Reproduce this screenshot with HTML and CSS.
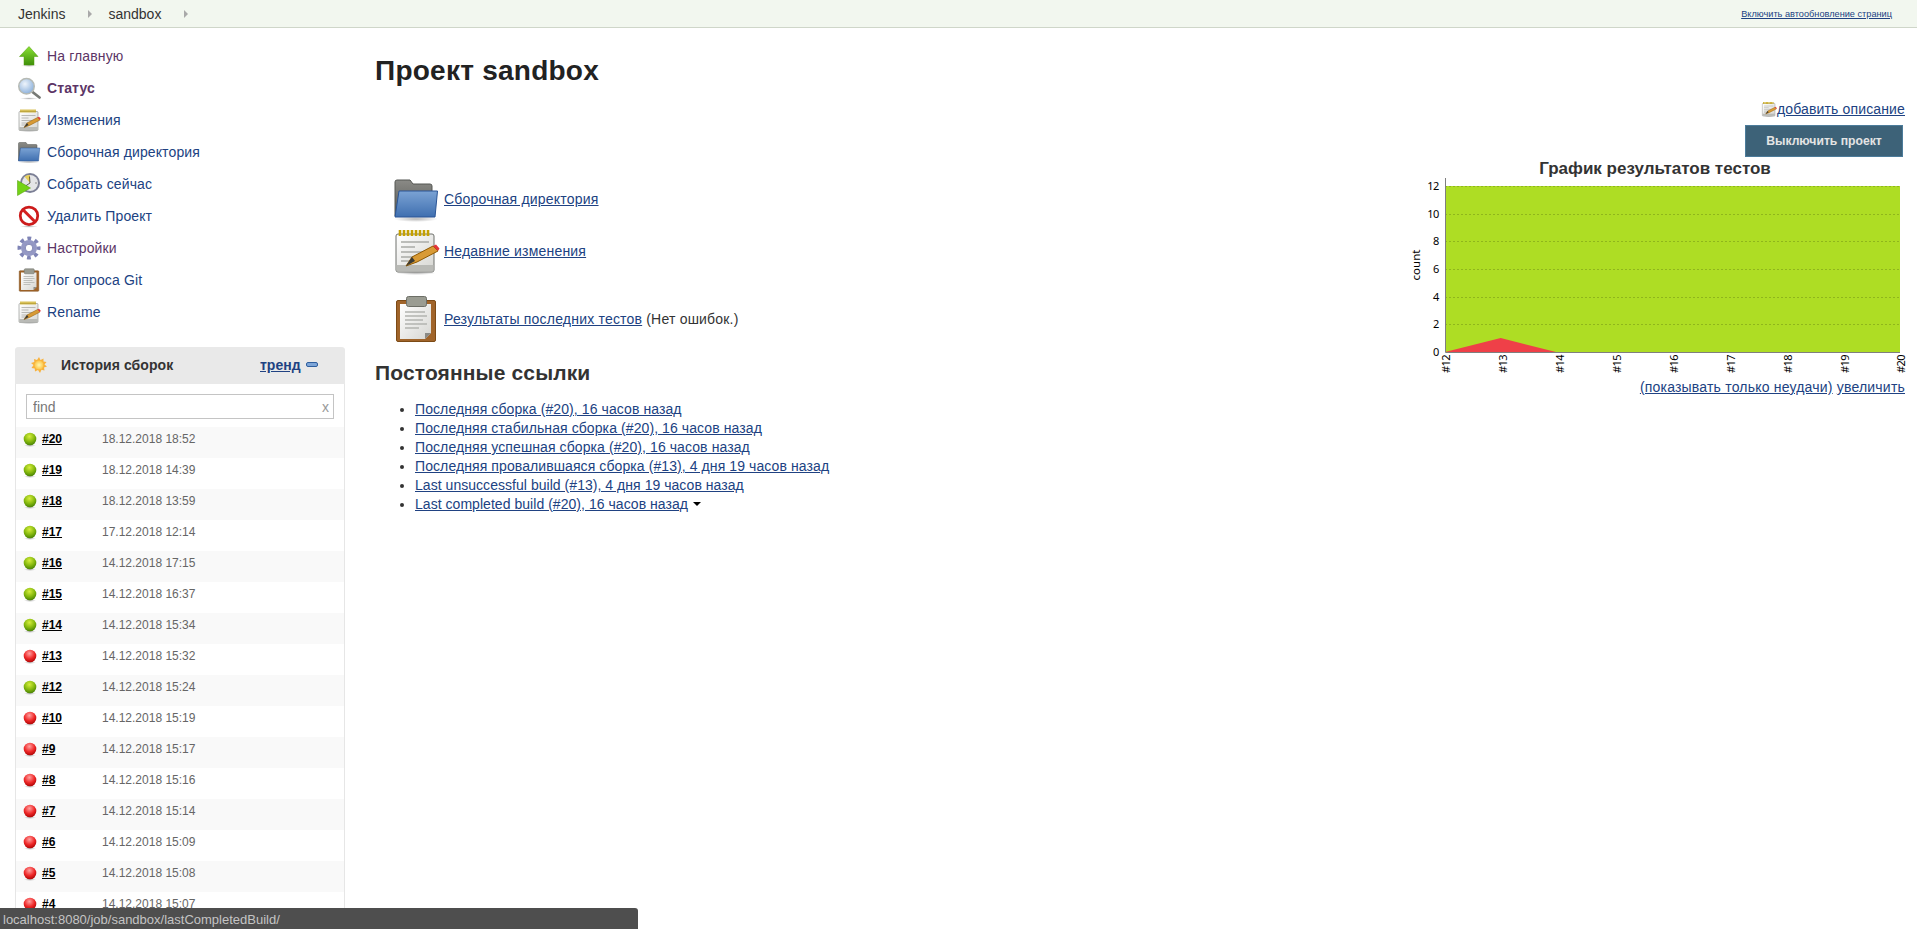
FILE: index.html
```html
<!DOCTYPE html>
<html lang="ru">
<head>
<meta charset="utf-8">
<title>sandbox [Jenkins]</title>
<link rel="stylesheet" href="styles.css">
</head>
<body>
<svg class="defs" width="0" height="0" aria-hidden="true">
  <defs>
    <linearGradient id="gGreen" x1="0" y1="0" x2="0" y2="1"><stop offset="0" stop-color="#8ae234"/><stop offset="1" stop-color="#3f8f0a"/></linearGradient>
    <linearGradient id="gBlue" x1="0" y1="0" x2="0" y2="1"><stop offset="0" stop-color="#7ba3d4"/><stop offset="1" stop-color="#3f6fb0"/></linearGradient>
    <linearGradient id="gGrey" x1="0" y1="0" x2="0" y2="1"><stop offset="0" stop-color="#8a8a86"/><stop offset="1" stop-color="#555753"/></linearGradient>
    <linearGradient id="gPaper" x1="0" y1="0" x2="1" y2="1"><stop offset="0" stop-color="#ffffff"/><stop offset="1" stop-color="#d6d6d2"/></linearGradient>
    <radialGradient id="gLens" cx=".4" cy=".35" r=".75"><stop offset="0" stop-color="#eef4fb"/><stop offset="1" stop-color="#7fa8d8"/></radialGradient>
    <radialGradient id="gBallG" cx=".45" cy=".3" r=".75"><stop offset="0" stop-color="#d6ee3c"/><stop offset=".55" stop-color="#85b80e"/><stop offset="1" stop-color="#3f7a04"/></radialGradient>
    <radialGradient id="gBallR" cx=".45" cy=".3" r=".75"><stop offset="0" stop-color="#ffa0a0"/><stop offset=".55" stop-color="#ef2929"/><stop offset="1" stop-color="#a40000"/></radialGradient>
    <radialGradient id="gSun" cx=".5" cy=".5" r=".5"><stop offset="0" stop-color="#fff7b0"/><stop offset="1" stop-color="#fcc64a"/></radialGradient>
    <radialGradient id="gShadow" cx=".5" cy=".5" r=".5"><stop offset="0" stop-color="#000" stop-opacity=".28"/><stop offset="1" stop-color="#000" stop-opacity="0"/></radialGradient>
    <symbol id="i-up" viewBox="0 0 48 48">
      <ellipse cx="24" cy="43" rx="16" ry="3" fill="url(#gShadow)"/>
      <path d="M24 5 42 25H34V42H14V25H5Z" fill="url(#gGreen)" stroke="#4e9a06" stroke-width="1"/>
    </symbol>
    <symbol id="i-search" viewBox="0 0 48 48">
      <ellipse cx="24" cy="45" rx="18" ry="2.500" fill="url(#gShadow)"/>
      <path d="M31 32 45 43" stroke="#777a75" stroke-width="5.500" stroke-linecap="round"/>
      <circle cx="19" cy="20.500" r="15.500" fill="url(#gLens)" stroke="#b6bab4" stroke-width="3"/>
    </symbol>
    <symbol id="i-notepad" viewBox="0 0 48 48">
      <ellipse cx="24" cy="46" rx="20" ry="2" fill="url(#gShadow)"/>
      <rect x="4" y="7" width="38" height="38" rx="2" fill="url(#gPaper)" stroke="#6f716c"/>
      <rect x="4.500" y="38" width="37" height="6.500" fill="#b9bab6"/>
      <path d="M8 3v6M12 3v6M16 3v6M20 3v6M24 3v6M28 3v6M32 3v6M36 3v6" stroke="#c4a000" stroke-width="2.600"/>
      <path d="M9 15h28M9 20h14M9 25h28M9 30h22M9 34h12" stroke="#a9aaa6" stroke-width="1.600"/>
      <path d="M14 39 20 30 41 19 46 24 25 35Z" fill="#d89a35" stroke="#8f5902" stroke-width="1"/>
      <path d="M41 19 44 17.500 47.500 21.500 46 24Z" fill="#e2343a"/>
      <path d="M14 39 20 30 23 34Z" fill="#3a3a36"/>
    </symbol>
    <symbol id="i-folder" viewBox="0 0 48 48">
      <ellipse cx="24" cy="44" rx="22" ry="3" fill="url(#gShadow)"/>
      <path d="M3 7a2 2 0 0 1 2-2h13l3 4h17a2 2 0 0 1 2 2v30H3Z" fill="url(#gGrey)" stroke="#555753"/>
      <path d="M7 16H45.500L43 42H3Z" fill="url(#gBlue)" stroke="#2a5596"/>
    </symbol>
    <symbol id="i-clock" viewBox="0 0 48 48">
      <circle cx="26" cy="22" r="20" fill="#7b7f95"/>
      <circle cx="26" cy="22" r="16" fill="#e4e5e7"/>
      <path d="M26 22 15 9A16 16 0 0 1 26 6Z" fill="#e8cf5a"/>
      <path d="M26 22 25 9M26 22 17 28" stroke="#3a3a36" stroke-width="1.600"/>
      <circle cx="38" cy="22" r="1.500" fill="#777"/>
      <path d="M1 17 27 32 1 47Z" fill="#73d216" stroke="#4e9a06"/>
    </symbol>
    <symbol id="i-stop" viewBox="0 0 48 48">
      <ellipse cx="24" cy="45" rx="18" ry="2.500" fill="url(#gShadow)"/>
      <circle cx="24" cy="23.500" r="17.500" fill="#fff" stroke="#cc1b1b" stroke-width="5.500"/>
      <path d="M12 11.500 36 35.500" stroke="#d52020" stroke-width="6"/>
    </symbol>
    <symbol id="i-gear" viewBox="0 0 48 48">
      <circle cx="24" cy="24" r="19" fill="none" stroke="#7f84b6" stroke-width="8" stroke-dasharray="7.500 7.420" stroke-dashoffset="3.750"/>
      <circle cx="24" cy="24" r="16" fill="#9498c4"/>
      <circle cx="24" cy="24" r="7.500" fill="#fff" stroke="#6a6fa5" stroke-width="1.500"/>
    </symbol>
    <symbol id="i-clip" viewBox="0 0 48 48">
      <rect x="4.500" y="5.500" width="39" height="41" rx="1.500" fill="#a0642a" stroke="#7c4a15"/>
      <path d="M8 9H39V38L33 44H8Z" fill="url(#gPaper)"/>
      <path d="M33 44 39 38H33Z" fill="#8a8a86"/>
      <path d="M13 17h20M13 21h22M13 25h18M13 29h22M13 33h14" stroke="#b3b4b0" stroke-width="1.600"/>
      <rect x="14.500" y="1.500" width="20" height="10" rx="2" fill="#9a9c92" stroke="#6c6e66"/>
    </symbol>
    <symbol id="i-sun" viewBox="0 0 16 16">
      <path d="M8 0 9.500 3 12.500 1.500 12.500 4.500 15.500 5 13.500 7.500 16 9.500 13 10.500 13.500 13.500 10.500 12.700 9 16 7 13 4 14.500 3.700 11.500 .5 11 2.500 8 0 6 3.300 5 3 2 6 3Z" fill="#f8b23c"/>
      <circle cx="8" cy="8" r="4.500" fill="url(#gSun)"/>
    </symbol>
    <symbol id="i-ok" viewBox="0 0 16 16">
      <ellipse cx="8" cy="14.500" rx="6" ry="1.500" fill="url(#gShadow)"/>
      <circle cx="8" cy="8" r="6.300" fill="url(#gBallG)"/>
    </symbol>
    <symbol id="i-fail" viewBox="0 0 16 16">
      <ellipse cx="8" cy="14.500" rx="6" ry="1.500" fill="url(#gShadow)"/>
      <circle cx="8" cy="8" r="6.300" fill="url(#gBallR)"/>
    </symbol>
  </defs>
</svg>

<header class="topbar">
  <nav class="crumbs">
    <a class="crumb" href="#">Jenkins</a><span class="crumb-arrow"></span>
    <a class="crumb" href="#">sandbox</a><span class="crumb-arrow"></span>
  </nav>
  <a class="refresh" href="#">Включить автообновление страниц</a>
</header>

<div class="layout">
  <aside class="side">
    <ul class="tasks">
      <li class="task"><svg class="ico24"><use href="#i-up"/></svg><a class="visited" href="#">На главную</a></li>
      <li class="task"><svg class="ico24"><use href="#i-search"/></svg><a class="visited current" href="#">Статус</a></li>
      <li class="task"><svg class="ico24"><use href="#i-notepad"/></svg><a href="#">Изменения</a></li>
      <li class="task"><svg class="ico24"><use href="#i-folder"/></svg><a href="#">Сборочная директория</a></li>
      <li class="task"><svg class="ico24"><use href="#i-clock"/></svg><a href="#">Собрать сейчас</a></li>
      <li class="task"><svg class="ico24"><use href="#i-stop"/></svg><a href="#">Удалить Проект</a></li>
      <li class="task"><svg class="ico24"><use href="#i-gear"/></svg><a class="visited" href="#">Настройки</a></li>
      <li class="task"><svg class="ico24"><use href="#i-clip"/></svg><a href="#">Лог опроса Git</a></li>
      <li class="task"><svg class="ico24"><use href="#i-notepad"/></svg><a href="#">Rename</a></li>
    </ul>

    <section class="history">
      <div class="history-head">
        <svg class="ico-sun"><use href="#i-sun"/></svg>
        <span class="history-title">История сборок</span>
        <a class="trend" href="#">тренд</a>
        <span class="minus"></span>
      </div>
      <div class="search"><input class="search-input" type="text" placeholder="find"><span class="search-x">x</span></div>
      <div class="builds">
        <div class="build"><svg class="ball"><use href="#i-ok"/></svg><a class="build-no" href="#">#20</a><span class="build-date">18.12.2018 18:52</span></div>
        <div class="build"><svg class="ball"><use href="#i-ok"/></svg><a class="build-no" href="#">#19</a><span class="build-date">18.12.2018 14:39</span></div>
        <div class="build"><svg class="ball"><use href="#i-ok"/></svg><a class="build-no" href="#">#18</a><span class="build-date">18.12.2018 13:59</span></div>
        <div class="build"><svg class="ball"><use href="#i-ok"/></svg><a class="build-no" href="#">#17</a><span class="build-date">17.12.2018 12:14</span></div>
        <div class="build"><svg class="ball"><use href="#i-ok"/></svg><a class="build-no" href="#">#16</a><span class="build-date">14.12.2018 17:15</span></div>
        <div class="build"><svg class="ball"><use href="#i-ok"/></svg><a class="build-no" href="#">#15</a><span class="build-date">14.12.2018 16:37</span></div>
        <div class="build"><svg class="ball"><use href="#i-ok"/></svg><a class="build-no" href="#">#14</a><span class="build-date">14.12.2018 15:34</span></div>
        <div class="build"><svg class="ball"><use href="#i-fail"/></svg><a class="build-no" href="#">#13</a><span class="build-date">14.12.2018 15:32</span></div>
        <div class="build"><svg class="ball"><use href="#i-ok"/></svg><a class="build-no" href="#">#12</a><span class="build-date">14.12.2018 15:24</span></div>
        <div class="build"><svg class="ball"><use href="#i-fail"/></svg><a class="build-no" href="#">#10</a><span class="build-date">14.12.2018 15:19</span></div>
        <div class="build"><svg class="ball"><use href="#i-fail"/></svg><a class="build-no" href="#">#9</a><span class="build-date">14.12.2018 15:17</span></div>
        <div class="build"><svg class="ball"><use href="#i-fail"/></svg><a class="build-no" href="#">#8</a><span class="build-date">14.12.2018 15:16</span></div>
        <div class="build"><svg class="ball"><use href="#i-fail"/></svg><a class="build-no" href="#">#7</a><span class="build-date">14.12.2018 15:14</span></div>
        <div class="build"><svg class="ball"><use href="#i-fail"/></svg><a class="build-no" href="#">#6</a><span class="build-date">14.12.2018 15:09</span></div>
        <div class="build"><svg class="ball"><use href="#i-fail"/></svg><a class="build-no" href="#">#5</a><span class="build-date">14.12.2018 15:08</span></div>
        <div class="build"><svg class="ball"><use href="#i-fail"/></svg><a class="build-no" href="#">#4</a><span class="build-date">14.12.2018 15:07</span></div>
      </div>
    </section>
  </aside>

  <main class="main">
    <div class="main-left">
      <h1 class="title">Проект sandbox</h1>
      <div class="actions">
        <div class="action"><svg class="ico48"><use href="#i-folder"/></svg><a href="#">Сборочная директория</a></div>
        <div class="action"><svg class="ico48"><use href="#i-notepad"/></svg><a href="#">Недавние изменения</a></div>
        <div class="action action-tests"><svg class="ico48"><use href="#i-clip"/></svg><span><a href="#">Результаты последних тестов</a> (Нет ошибок.)</span></div>
      </div>
      <h2 class="sub">Постоянные ссылки</h2>
      <ul class="perma">
        <li><a href="#">Последняя сборка (#20), 16 часов назад</a></li>
        <li><a href="#">Последняя стабильная сборка (#20), 16 часов назад</a></li>
        <li><a href="#">Последняя успешная сборка (#20), 16 часов назад</a></li>
        <li><a href="#">Последняя провалившаяся сборка (#13), 4 дня 19 часов назад</a></li>
        <li class="perma-latin"><a href="#">Last unsuccessful build (#13), 4 дня 19 часов назад</a></li>
        <li class="perma-latin"><a href="#">Last completed build (#20), 16 часов назад</a><span class="caret"></span></li>
      </ul>
    </div>

    <div class="main-right">
      <div class="describe"><svg class="ico16"><use href="#i-notepad"/></svg><a href="#">добавить описание</a></div>
      <button class="disable" type="button">Выключить проект</button>
      <div class="chart">
        <div class="chart-title">График результатов тестов</div>
        <svg class="chart-svg" viewBox="0 0 500 200" width="500" height="200">
          <rect x="40" y="8" width="455" height="166" fill="#aedd24"/>
          <path d="M40 174 95.700 160 151 174Z" fill="#ef4048"/>
          <g class="grid">
            <path d="M40 8.500H495M40 36.500H495M40 63.500H495M40 91.500H495M40 119.500H495M40 146.500H495"/>
          </g>
          <path class="axis" d="M40.500 0V174.500H495"/>
          <g class="ylab">
            <text x="34" y="12">12</text><text x="34" y="40">10</text><text x="34" y="67">8</text>
            <text x="34" y="95">6</text><text x="34" y="123">4</text><text x="34" y="150">2</text><text x="34" y="178">0</text>
          </g>
          <text class="ytitle" transform="translate(15 87) rotate(-90)">count</text>
          <g class="xlab">
            <text transform="translate(45 195) rotate(-90)">#12</text>
            <text transform="translate(102 195) rotate(-90)">#13</text>
            <text transform="translate(159 195) rotate(-90)">#14</text>
            <text transform="translate(216 195) rotate(-90)">#15</text>
            <text transform="translate(273 195) rotate(-90)">#16</text>
            <text transform="translate(330 195) rotate(-90)">#17</text>
            <text transform="translate(387 195) rotate(-90)">#18</text>
            <text transform="translate(444 195) rotate(-90)">#19</text>
            <text transform="translate(500 195) rotate(-90)">#20</text>
          </g>
        </svg>
        <div class="chart-links"><a href="#">(показывать только неудачи)</a> <a href="#">увеличить</a></div>
      </div>
    </div>
  </main>
</div>

<div class="statusbar">localhost:8080/job/sandbox/lastCompletedBuild/</div>
</body>
</html>
```

FILE: styles.css
```css
html, body {
  margin: 0;
  padding: 0;
  height: 100%;
  overflow: hidden;
  background: #fff;
}
body {
  font-family: "Liberation Sans", Arial, sans-serif;
  font-size: 14px;
  color: #333;
  position: relative;
}
a { color: #204282; }
.defs { position: absolute; }

/* top bar */
.topbar {
  height: 27px;
  border-bottom: 1px solid #cfd6c9;
  background: #f2f7ef;
  display: flex;
  align-items: center;
  justify-content: space-between;
  padding: 0 25px 0 18px;
}
.crumbs { display: flex; align-items: center; }
.crumb { color: #333; text-decoration: none; font-size: 14px; }
.crumb-arrow {
  width: 0;
  height: 0;
  border-left: 4px solid #a9a9a9;
  border-top: 4px solid transparent;
  border-bottom: 4px solid transparent;
  margin: 0 16px 0 23px;
}
.refresh { font-size: 9.200px; }

.layout { display: flex; }

/* side */
.side { width: 360px; flex: none; padding: 12px 0 0 15px; box-sizing: border-box; }
.tasks { list-style: none; margin: 0; padding: 0; }
.task {
  height: 32px;
  display: flex;
  align-items: center;
  gap: 6px;
  padding-left: 2px;
}
.task a { text-decoration: none; letter-spacing: .12px; }
.task a.visited { color: #5c3566; }
.task a.current { font-weight: bold; }
.ico24 { width: 24px; height: 24px; flex: none; }

.history {
  width: 330px;
  box-sizing: border-box;
  margin-top: 19px;
  border: 1px solid #e6e6e6;
  border-top: 0;
  border-radius: 4px 4px 0 0;
}
.history-head {
  height: 37px;
  box-sizing: border-box;
  padding: 0 0 2px 16px;
  background: #e9e9e9;
  margin: 0 -1px;
  border-radius: 4px 4px 0 0;
  display: flex;
  align-items: center;
}
.ico-sun { width: 16px; height: 16px; flex: none; }
.history-title { font-weight: bold; margin-left: 14px; width: 199px; flex: none; color: #333; letter-spacing: .08px; }
.trend { font-weight: bold; }
.minus {
  width: 12px;
  height: 5px;
  margin-left: 5px;
  background: #7ea6d8;
  border: 1px solid #2f5f9e;
  box-sizing: border-box;
  border-radius: 2px;
}
.search {
  display: flex;
  align-items: center;
  margin: 10px 10px 8px 10px;
  height: 25px;
  box-sizing: border-box;
  border: 1px solid #c4c4c4;
  padding: 0 4px 0 6px;
}
.search-input {
  flex: 1;
  min-width: 0;
  border: 0;
  outline: 0;
  padding: 0;
  font: 14px "Liberation Sans", Arial, sans-serif;
}
.search-input::placeholder { color: #777; opacity: 1; }
.search-x { color: #999; font-size: 14px; }

.build {
  height: 31px;
  box-sizing: border-box;
  display: flex;
  align-items: flex-start;
  padding: 5px 0 0 6px;
  line-height: 14px;
  font-size: 12px;
}
.build:nth-child(odd) { background: #f9f9f9; }
.ball { width: 16px; height: 16px; flex: none; margin-top: -1px; }
.build-no { color: #000; font-weight: bold; width: 60px; margin-left: 4px; flex: none; }
.build-date { color: #666; }

/* main */
.main { flex: 1; min-width: 0; display: flex; padding: 0 12px 0 15px; justify-content: space-between; }
.main-left { flex: 1; min-width: 0; }
.title { font-size: 28px; line-height: 32px; margin: 27px 0 0; color: #222; letter-spacing: .25px; }
.actions { margin-top: 88px; padding-left: 17px; letter-spacing: .2px; }
.action { display: flex; align-items: center; gap: 4px; height: 48px; margin-bottom: 4px; }
.action-tests { margin-top: 20px; margin-bottom: 0; }
.ico48 { width: 48px; height: 48px; flex: none; }
.sub { font-size: 21px; line-height: 24px; margin: 18px 0 0; color: #333; letter-spacing: .14px; }
.perma { margin: 15px 0 0; padding: 0 0 0 40px; line-height: 19px; letter-spacing: .09px; }
.perma-latin { letter-spacing: .04px; }
.caret {
  display: inline-block;
  width: 0;
  height: 0;
  margin-left: 5px;
  vertical-align: 3px;
  border-top: 4px solid #000;
  border-left: 4px solid transparent;
  border-right: 4px solid transparent;
}

.main-right { width: 510px; flex: none; display: flex; flex-direction: column; align-items: flex-end; padding-top: 72px; }
.describe { display: flex; align-items: center; height: 18px; letter-spacing: .14px; }
.ico16 { width: 16px; height: 16px; flex: none; }
.disable {
  width: 158px;
  height: 32px;
  margin: 7px 2px 0 0;
  border: 1px solid #4c7c9b;
  background: #3d6278;
  color: #e4e4e4;
  font: bold 12.200px "Liberation Sans", Arial, sans-serif;
  padding: 0;
}
.chart { width: 500px; margin-top: 1px; }
.chart-title { font-size: 17px; line-height: 19px; padding-top: 1px; font-weight: bold; text-align: center; color: #333; }
.chart-svg { display: block; overflow: visible; }
.chart-svg text { font-family: "Noto Sans", sans-serif; fill: #000; }
.grid path { stroke: #8fb61c; stroke-width: 1; stroke-dasharray: 2 2; fill: none; }
.axis { fill: none; stroke: #7f7f7f; stroke-width: 1; }
.ylab text { font-size: 11px; letter-spacing: -.4px; text-anchor: end; }
.xlab text { font-size: 11px; letter-spacing: -.6px; text-anchor: start; }
.ytitle { font-size: 11.500px; text-anchor: middle; }
.chart-links { text-align: right; line-height: 18px; letter-spacing: .2px; }

.statusbar {
  position: absolute;
  left: 0;
  bottom: 0;
  width: 638px;
  height: 21px;
  box-sizing: border-box;
  padding: 4px 0 0 3px;
  background: #4e4e4e;
  color: #c4c4c4;
  font-size: 13px;
  line-height: 15px;
  border-radius: 0 3px 0 0;
}
```
